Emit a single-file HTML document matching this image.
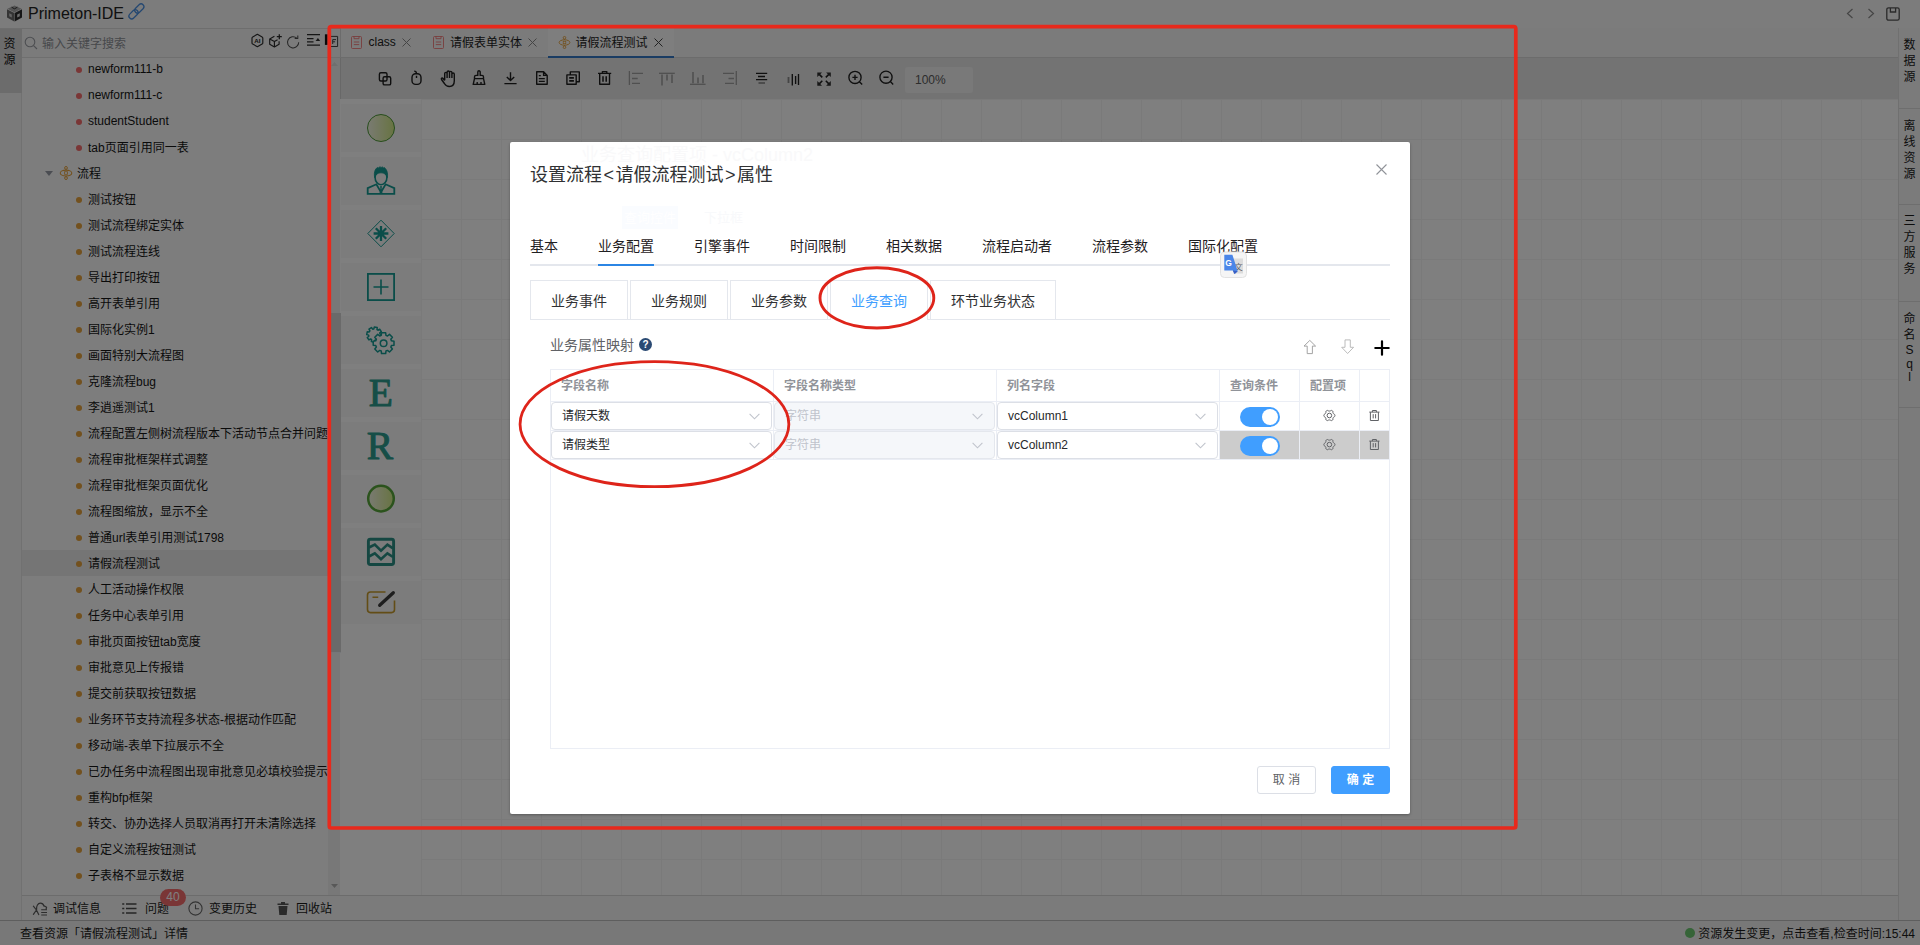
<!DOCTYPE html>
<html lang="zh-CN">
<head>
<meta charset="utf-8">
<title>Primeton-IDE</title>
<style>
*{box-sizing:border-box;margin:0;padding:0}
html,body{width:1920px;height:945px;overflow:hidden;background:#fff}
body{font-family:"Liberation Sans","Noto Sans CJK SC",sans-serif;font-size:12px;color:#1a1a1a;position:relative}
.abs{position:absolute}
svg{display:block;overflow:visible}
/* ---------- under layer ---------- */
#under{position:absolute;left:0;top:0;width:1920px;height:945px;background:#fff}
.topbar{position:absolute;left:0;top:0;width:1920px;height:29px;background:#f8f8f8;border-bottom:1px solid #dcdcdc}
.topbar .ttl{position:absolute;left:28px;top:0;line-height:27px;font-size:16px;color:#222}
.lrail{position:absolute;left:0;top:29px;width:22px;height:891px;background:#f4f4f4;border-right:1px solid #e2e2e2}
.lrail .act{position:absolute;left:0;top:0;width:22px;height:64px;background:#d9d9d9;font-size:12px;line-height:16px;text-align:center;padding:6.5px 3px 0 0;color:#111}
.search{position:absolute;left:22px;top:29px;width:318px;height:29px;background:#f6f6f6;border-bottom:1px solid #dedede}
.search .ph{position:absolute;left:20px;top:1px;line-height:29px;color:#8e9196;font-size:12px}
.tree{position:absolute;left:22px;top:58px;width:306px;height:837px;overflow:hidden;background:#fbfbfb}
.tr{position:absolute;left:0;width:306px;height:26px;line-height:26px;white-space:nowrap;font-size:12px;color:#141414}
.tr.sel{background:#ebebeb}
.dot{position:absolute;left:54px;top:11px;width:6px;height:6px;border-radius:50%}
.dr{background:#f56c6c}.do{background:#e6a23c}
.lt{position:absolute;left:66px;top:1px}.lt.en{top:0}
.ft{position:absolute;left:55px;top:1px}
.caret{position:absolute;left:23px;top:11px;border:4px solid transparent;border-top:5px solid #969ba5;border-bottom:0}
.fico{position:absolute;left:37px;top:6px;width:14px;height:14px}
.tscroll{position:absolute;left:328px;top:58px;width:12px;height:837px;background:#f1f1f1}
.tscroll .th{position:absolute;left:3px;top:255px;width:7px;height:340px;background:#d5d5d5}
.bbar{position:absolute;left:22px;top:895px;width:1876px;height:25px;background:#f7f7f7;border-top:1px solid #d9d9d9;line-height:25px}
.sbar{position:absolute;left:0;top:920px;width:1920px;height:25px;background:#f0f0f0;border-top:1px solid #bdbdbd;line-height:25px;font-size:12px;color:#1a1a1a}
.rrail{position:absolute;left:1898px;top:28px;width:22px;height:892px;background:#f6f6f6;border-left:1px solid #e0e0e0}
.rrail .it{position:absolute;left:0;width:21px;text-align:center;font-size:12px;line-height:16px;color:#1a1a1a;border-bottom:1px solid #dcdcdc}
.etabs{position:absolute;left:340px;top:28px;width:1558px;height:30px;background:#f7f7f7;border-bottom:1px solid #d8d8d8;border-left:1px solid #d8d8d8}
.etab{position:absolute;top:0;height:29px;line-height:28px;font-size:12px;color:#222;white-space:nowrap}
.etab.on{background:#fdfdfd;height:30px;border-bottom:2px solid #3478c6}
.etool{position:absolute;left:340px;top:58px;width:1558px;height:41px;background:#e7e7e7;border-left:1px solid #d0d0d0}
.canvas{position:absolute;left:341px;top:99px;width:1557px;height:796px;background-color:#fff;
 background-image:linear-gradient(to right,#f5f5f5 1px,transparent 1px),linear-gradient(to bottom,#f5f5f5 1px,transparent 1px);
 background-size:40px 40px;background-position:0 0}
.pal{position:absolute;left:341px;top:99px;width:80px;height:796px;background:#fff}
.pi{position:absolute;left:0;width:80px;height:48px;background:#f8f8f8}
#dim{position:absolute;left:0;top:0;width:1920px;height:945px;background:rgba(0,0,0,.5)}
/* ---------- modal ---------- */
#modal{position:absolute;left:510px;top:142px;width:900px;height:672px;background:#fff;border-radius:2px;box-shadow:0 1px 3px rgba(0,0,0,.3);color:#303133}
#modal .title{position:absolute;left:20px;top:20px;font-size:18px;line-height:26px;color:#303133;white-space:nowrap}
.mtab{position:absolute;top:84px;height:40px;line-height:40px;font-size:14px;color:#1f2022;white-space:nowrap}
.mline{position:absolute;left:20px;top:122px;width:860px;height:2px;background:#e4e7ed}
.mbar{position:absolute;left:88px;top:122px;width:56px;height:2px;background:#2b85e4}
.card{position:absolute;top:138px;height:40px;width:98px;border:1px solid #e4e7ed;border-bottom:none;line-height:40px;font-size:14px;color:#303133;text-align:center;white-space:nowrap}
.cline{position:absolute;left:20px;top:177px;width:860px;height:1px;background:#e4e7ed}
.sect{position:absolute;left:40px;top:193px;font-size:14px;line-height:20px;color:#606266}
.tbl{position:absolute;left:40px;top:227px;width:840px;height:380px;border:1px solid #ebeef5}
.th{position:absolute;top:0;height:32px;line-height:32px;font-size:12px;font-weight:bold;color:#909399;padding-left:10px;border-right:1px solid #ebeef5;border-bottom:1px solid #ebeef5;white-space:nowrap}
.td{position:absolute;height:29px;border-right:1px solid #ebeef5;border-bottom:1px solid #ebeef5}
.td.hl{background:#cccccc}
.sel2{position:absolute;left:0;top:0;width:221px;height:28px;border:1px solid #dcdfe6;border-radius:4px;background:#fff;line-height:26px;font-size:12px;color:#26282b;padding-left:10px;white-space:nowrap}
.sel2.dis{background:#f5f7fa;border-color:#e4e7ed;color:#c0c4cc}
.sel2 svg{position:absolute;right:11px;top:10px;width:11px;height:7px}
.sw{position:absolute;left:20px;top:5px;width:40px;height:20px;border-radius:10px;background:#409eff}
.sw:after{content:"";position:absolute;right:2px;top:2px;width:16px;height:16px;border-radius:50%;background:#fff}
.btn{position:absolute;top:624px;height:28px;width:59px;border-radius:3px;font-size:12px;line-height:26px;text-align:center;white-space:nowrap}
.btn.c{left:747px;border:1px solid #dcdfe6;color:#606266;background:#fff}
.btn.p{left:821px;width:59px;border:1px solid #409eff;background:#409eff;color:#fff;font-weight:bold}
</style>
</head>
<body>
<div id="under">
 <div class="topbar">
  <svg class="abs" style="left:6px;top:5px;width:17px;height:17px" viewBox="0 0 17 17"><path d="M1 4.2 8.3 8v8.5L1 12.6z" fill="#6a6a6a"/><path d="M16 4.2 8.7 8v8.5l7.3-3.9z" fill="#2c2c2c"/><path d="M8.5 0.6 15.6 3.8 8.5 7.4 1.4 3.8z" fill="#a8a8a8"/><path d="M5.6 2.2 8.5 3.8l2.9-1.6" fill="none" stroke="#333" stroke-width="1"/><path d="M3.2 8.2v3l2.6 1.3V9.6z" fill="#c9c9c9"/><path d="M13.8 8.2v3l-2.6 1.3V9.6z" fill="#d8d8d8"/></svg>
  <div class="ttl">Primeton-IDE</div>
  <svg class="abs" style="left:0;top:0;width:160px;height:28px" viewBox="0 0 160 28" fill="none" stroke="#4a90e2" stroke-width="1.25"><rect x="-5.300" y="-2.800" width="10.600" height="5.600" rx="2.800" transform="translate(139.300 8.500) rotate(-45)"/><rect x="-5.300" y="-2.800" width="10.600" height="5.600" rx="2.800" transform="translate(133.500 14.300) rotate(-45)"/></svg>
  <svg class="abs" style="left:1846px;top:8px;width:8px;height:11px" viewBox="0 0 8 11" fill="none" stroke="#8a8a8a" stroke-width="1.2"><path d="M6.5 1 1.5 5.5l5 4.5"/></svg>
  <svg class="abs" style="left:1867px;top:8px;width:8px;height:11px" viewBox="0 0 8 11" fill="none" stroke="#8a8a8a" stroke-width="1.2"><path d="M1.5 1l5 4.5-5 4.5"/></svg>
  <svg class="abs" style="left:1886px;top:7px;width:14px;height:14px" viewBox="0 0 14 14" fill="none" stroke="#555" stroke-width="1.3"><rect x="0.8" y="0.8" width="12.4" height="12.4" rx="1.8"/><path d="M4.4 1v4h5.2V1"/></svg>
 </div>
 <div class="lrail"><div class="act">资<br>源</div></div>
 <div class="search">
  <svg class="abs" style="left:2px;top:7px;width:14px;height:14px" viewBox="0 0 14 14" fill="none" stroke="#9a9da3" stroke-width="1.1"><circle cx="6" cy="6" r="4.8"/><path d="M9.6 9.6 13 13"/></svg>
  <div class="ph">输入关键字搜索</div>
  <svg class="abs" style="left:0;top:0;width:319px;height:29px" viewBox="22 29 319 29" fill="none" stroke="#2a2a2a" stroke-width="1.150" stroke-linejoin="round">
   <path d="M257.400 34.300 262.100 36.900a1.400 1.400 0 0 1 .7 1.200v4.800a1.400 1.400 0 0 1-.7 1.200L257.400 46.700 252.700 44.100a1.400 1.400 0 0 1-.7-1.200v-4.800a1.400 1.400 0 0 1 .7-1.200Z"/>
   <text x="257.400" y="42.700" font-size="6.200" font-family="Liberation Sans,sans-serif" font-weight="bold" fill="#1e1e1e" stroke="none" text-anchor="middle">AI</text>
   <path d="M274.400 36.300 269.700 38.900v5.400l4.700 2.600 4.700-2.600V41.300M269.700 38.900l4.700 2.600 3.200-1.800M274.400 41.500v5.400"/>
   <path d="M279.300 34.200v5M276.800 36.700h5" stroke-width="1.250"/>
   <path d="M298.700 42.300a5.600 5.600 0 1 1-1.900-4.200" stroke="#4c4c4c" stroke-width="1.050"/><path d="M297.800 35.400v3.100h-3.100" stroke="#4c4c4c" stroke-width="1.050"/>
   <path d="M307 34.700H320M307 38.500H313.500M307 41.800H313.500M307 45.200H320" stroke-width="1.250"/>
   <path d="M315.600 41 317.900 38.100 320.200 41Z" fill="#2a2a2a" stroke="none"/>
   <rect x="324.900" y="34.300" width="2.700" height="10.600" fill="#141414" stroke="none"/>
   <rect x="329.500" y="36.400" width="8.100" height="10.100" stroke="#444" stroke-width="1"/>
   <path d="M332.700 44v-4.400h3.300M332.700 41.800h2.400" stroke="#444" stroke-width="1"/>
  </svg>
 </div>
 <div class="tree">
<div class="tr" style="top:-2px"><i class="dot dr"></i><span class="lt en">newform111-b</span></div>
<div class="tr" style="top:24px"><i class="dot dr"></i><span class="lt en">newform111-c</span></div>
<div class="tr" style="top:50px"><i class="dot dr"></i><span class="lt en">studentStudent</span></div>
<div class="tr" style="top:76px"><i class="dot dr"></i><span class="lt">tab页面引用同一表</span></div>
<div class="tr" style="top:102px"><i class="caret"></i><svg class="fico" viewBox="0 0 14 14"><ellipse cx="7" cy="7" rx="5.800" ry="2.900" fill="none" stroke="#e6a23c" stroke-width="1.050"/><rect x="5.600" y="5.700" width="2.800" height="2.600" fill="none" stroke="#e6a23c" stroke-width=".8"/><circle cx="7" cy="1.900" r="1.400" fill="none" stroke="#e6a23c" stroke-width="1"/><circle cx="7" cy="12.100" r="1.400" fill="none" stroke="#e6a23c" stroke-width="1"/><path d="M7 3.300v.9M7 9.800v.9" stroke="#e6a23c" stroke-width="1"/></svg><span class="ft">流程</span></div>
<div class="tr" style="top:128px"><i class="dot do"></i><span class="lt">测试按钮</span></div>
<div class="tr" style="top:154px"><i class="dot do"></i><span class="lt">测试流程绑定实体</span></div>
<div class="tr" style="top:180px"><i class="dot do"></i><span class="lt">测试流程连线</span></div>
<div class="tr" style="top:206px"><i class="dot do"></i><span class="lt">导出打印按钮</span></div>
<div class="tr" style="top:232px"><i class="dot do"></i><span class="lt">高开表单引用</span></div>
<div class="tr" style="top:258px"><i class="dot do"></i><span class="lt">国际化实例1</span></div>
<div class="tr" style="top:284px"><i class="dot do"></i><span class="lt">画面特别大流程图</span></div>
<div class="tr" style="top:310px"><i class="dot do"></i><span class="lt">克隆流程bug</span></div>
<div class="tr" style="top:336px"><i class="dot do"></i><span class="lt">李逍遥测试1</span></div>
<div class="tr" style="top:362px"><i class="dot do"></i><span class="lt">流程配置左侧树流程版本下活动节点合并问题</span></div>
<div class="tr" style="top:388px"><i class="dot do"></i><span class="lt">流程审批框架样式调整</span></div>
<div class="tr" style="top:414px"><i class="dot do"></i><span class="lt">流程审批框架页面优化</span></div>
<div class="tr" style="top:440px"><i class="dot do"></i><span class="lt">流程图缩放，显示不全</span></div>
<div class="tr" style="top:466px"><i class="dot do"></i><span class="lt">普通url表单引用测试1798</span></div>
<div class="tr sel" style="top:492px"><i class="dot do"></i><span class="lt">请假流程测试</span></div>
<div class="tr" style="top:518px"><i class="dot do"></i><span class="lt">人工活动操作权限</span></div>
<div class="tr" style="top:544px"><i class="dot do"></i><span class="lt">任务中心表单引用</span></div>
<div class="tr" style="top:570px"><i class="dot do"></i><span class="lt">审批页面按钮tab宽度</span></div>
<div class="tr" style="top:596px"><i class="dot do"></i><span class="lt">审批意见上传报错</span></div>
<div class="tr" style="top:622px"><i class="dot do"></i><span class="lt">提交前获取按钮数据</span></div>
<div class="tr" style="top:648px"><i class="dot do"></i><span class="lt">业务环节支持流程多状态-根据动作匹配</span></div>
<div class="tr" style="top:674px"><i class="dot do"></i><span class="lt">移动端-表单下拉展示不全</span></div>
<div class="tr" style="top:700px"><i class="dot do"></i><span class="lt">已办任务中流程图出现审批意见必填校验提示</span></div>
<div class="tr" style="top:726px"><i class="dot do"></i><span class="lt">重构bfp框架</span></div>
<div class="tr" style="top:752px"><i class="dot do"></i><span class="lt">转交、协办选择人员取消再打开未清除选择</span></div>
<div class="tr" style="top:778px"><i class="dot do"></i><span class="lt">自定义流程按钮测试</span></div>
<div class="tr" style="top:804px"><i class="dot do"></i><span class="lt">子表格不显示数据</span></div>
 </div>
 <div class="tscroll"><div class="th"></div>
  <svg class="abs" style="left:3px;top:4px;width:7px;height:4px" viewBox="0 0 7 4"><path d="M0 4 3.5 0 7 4z" fill="#dedede"/></svg>
  <svg class="abs" style="left:3px;top:826px;width:7px;height:4px" viewBox="0 0 7 4"><path d="M0 0 3.5 4 7 0z" fill="#b0b0b0"/></svg>
 </div>

 <div class="etabs">
  <div class="etab" style="left:0;width:78px">
   <svg class="abs" style="left:10px;top:8px;width:11px;height:13px" viewBox="0 0 11 13" fill="none" stroke="#f27878" stroke-width=".9"><rect x=".5" y=".5" width="10" height="12" rx="1"/><path d="M3 .5v2.2h5V.5M2.8 6h5.4M2.8 8.6h5.4"/></svg>
   <span class="abs" style="left:27.5px">class</span>
   <svg class="abs" style="left:61px;top:10px;width:9px;height:9px" viewBox="0 0 9 9" stroke="#8a8a8a" stroke-width="1"><path d="M.5.5l8 8M8.5.5l-8 8"/></svg>
  </div>
  <div class="etab" style="left:82px;width:124px">
   <svg class="abs" style="left:10px;top:8px;width:11px;height:13px" viewBox="0 0 11 13" fill="none" stroke="#f27878" stroke-width=".9"><rect x=".5" y=".5" width="10" height="12" rx="1"/><path d="M3 .5v2.2h5V.5M2.8 6h5.4M2.8 8.6h5.4"/></svg>
   <span class="abs" style="left:27px;top:1px">请假表单实体</span>
   <svg class="abs" style="left:105px;top:10px;width:9px;height:9px" viewBox="0 0 9 9" stroke="#8a8a8a" stroke-width="1"><path d="M.5.5l8 8M8.5.5l-8 8"/></svg>
  </div>
  <div class="etab on" style="left:207px;width:126px">
   <svg class="abs" style="left:10px;top:8px;width:13px;height:13px" viewBox="0 0 14 14"><ellipse cx="7" cy="7" rx="5.800" ry="2.900" fill="none" stroke="#e6a23c" stroke-width="1.050"/><rect x="5.600" y="5.700" width="2.800" height="2.600" fill="none" stroke="#e6a23c" stroke-width=".8"/><circle cx="7" cy="1.900" r="1.400" fill="none" stroke="#e6a23c" stroke-width="1"/><circle cx="7" cy="12.100" r="1.400" fill="none" stroke="#e6a23c" stroke-width="1"/><path d="M7 3.300v.9M7 9.800v.9" stroke="#e6a23c" stroke-width="1"/></svg>
   <span class="abs" style="left:27.5px;top:1px">请假流程测试</span>
   <svg class="abs" style="left:106px;top:10px;width:9px;height:9px" viewBox="0 0 9 9" stroke="#444" stroke-width="1"><path d="M.5.5l8 8M8.5.5l-8 8"/></svg>
  </div>
 </div>
 <div class="etool" id="etool">
<!--TOOLICONS-->
  <div class="abs" style="left:564px;top:9px;width:68px;height:26px;border-radius:3px;background:#f2f2f2;line-height:26px;font-size:12px;color:#5a5a5a;padding-left:10px">100%</div>
 </div>
 <div class="canvas"></div>
 <div class="pal" id="pal">
  <div class="pi" style="top:5px"></div>
  <div class="pi" style="top:58px"></div>
  <div class="pi" style="top:111px"></div>
  <div class="pi" style="top:164px"></div>
  <div class="pi" style="top:217px"></div>
  <div class="pi" style="top:270px"></div>
  <div class="pi" style="top:323px"></div>
  <div class="pi" style="top:376px"></div>
  <div class="pi" style="top:429px"></div>
  <div class="pi" style="top:482px;height:43px"></div>
 </div>
 <div class="rrail">
  <div class="it" style="top:0;height:81px;padding-top:8.5px">数<br>据<br>源</div>
  <div class="it" style="top:81px;height:96px;padding-top:8.5px">离<br>线<br>资<br>源</div>
  <div class="it" style="top:177px;height:97px;padding-top:7.5px">三<br>方<br>服<br>务</div>
  <div class="it" style="top:274px;height:106px;padding-top:8.5px">命<br>名<br><span style="line-height:15px;display:block">S</span><span style="line-height:13px;display:block">q</span><span style="line-height:12px;display:block">l</span></div>
 </div>
 <div class="bbar">
  <svg class="abs" style="left:0;top:0;width:60px;height:25px" viewBox="22 896 60 25" fill="none" stroke="#5a5a5a" stroke-width="1.200" stroke-linejoin="round" stroke-linecap="round"><path d="M36.600 909.600c-.3-3.600 1.200-6.400 3.800-6.400 1.900 0 3.100 1.200 3.700 3M33.400 906.200l3 3.800-3 4.300M36.400 910l2.300 4.600M43.600 905.400l3 1.800-.5 2"/><path d="M41.200 909.800h5.800M41.200 912.400h5.800M41.200 915h5.800" stroke-width="1.050" stroke-linecap="butt"/></svg>
  <span class="abs" style="left:31px;top:1px">调试信息</span>
  <svg class="abs" style="left:100px;top:7px;width:15px;height:11px" viewBox="0 0 15 11" fill="none" stroke="#4a4a4a" stroke-width="1.600"><path d="M4 1h10.500M4 5.500h10.500M4 10h10.500M.2 1h2.100M.2 5.500h2.100M.2 10h2.100"/></svg>
  <span class="abs" style="left:123px;top:1px">问题</span>
  <div class="abs" style="left:138px;top:-7px;width:26px;height:17px;border-radius:9px;background:#f56c6c;color:#fff;font-size:12px;line-height:17px;text-align:center">40</div>
  <svg class="abs" style="left:166px;top:5px;width:15px;height:15px" viewBox="0 0 15 15" fill="none" stroke="#666" stroke-width="1.1"><circle cx="7.5" cy="7.5" r="6.6"/><path d="M7.5 3.400v4.300h3.600"/></svg>
  <span class="abs" style="left:187px;top:1px">变更历史</span>
  <svg class="abs" style="left:255px;top:6px;width:12px;height:13px" viewBox="0 0 12 13" fill="#555"><path d="M4 0h4v1.400h3.500v1.500H.5V1.400H4zM1.500 3.900h9L9.700 13H2.300z"/></svg>
  <span class="abs" style="left:274px;top:1px">回收站</span>
 </div>
 <div class="sbar"><span class="abs" style="left:20px;top:1px">查看资源「请假流程测试」详情</span>
  <i class="abs" style="left:1685px;top:7px;width:10px;height:10px;border-radius:50%;background:#6cc870"></i>
  <span class="abs" style="right:5px;top:1px;white-space:nowrap">资源发生变更，点击查看,检查时间:15:44</span>
 </div>
<svg class="abs" style="left:0;top:0;width:1920px;height:945px" viewBox="0 0 1920 945" fill="none" stroke-linecap="butt">
 <defs>
  <linearGradient id="gcirc" x1="0" y1="0" x2="1" y2="0"><stop offset="0" stop-color="#f4f6e6"/><stop offset="1" stop-color="#d0e884"/></linearGradient>
 </defs>
 <!-- toolbar icons -->
 <g stroke="#1e1e1e" stroke-width="1.4" stroke-linejoin="round">
  <rect x="379.4" y="72.800" width="7.600" height="8.200" rx="1.500"/><rect x="383.100" y="76.700" width="7.600" height="8.200" rx="1.500"/>
  <rect x="412" y="73.800" width="9" height="10.600" rx="3.600"/><path d="M416.500 75.800v2.200M416.500 73.800c0-1.900-.5-2.700-2.300-2.700"/>
  <path d="M444.700 80.200V73.600a1.200 1.200 0 0 1 2.400 0V78M447.100 73.800V72.200a1.200 1.200 0 0 1 2.400 0V78M449.500 72.600a1.200 1.200 0 0 1 2.400 0V78M451.900 74.200a1.200 1.200 0 0 1 2.400 0V80.800c0 3.700-2 5.700-5 5.700-2.500 0-3.700-1-4.900-3L441.500 79.500c-.6-1.100.7-2.100 1.600-1l1.600 2"/>
  <path d="M477.800 75.400V72a1.200 1.200 0 0 1 2.400 0V75.400H482a1.500 1.500 0 0 1 1.500 1.500V78.600L484.800 84.400H473.200L474.500 78.600V76.900a1.500 1.500 0 0 1 1.500-1.500ZM474.500 78.600H483.500M477.200 84.400v-2.400M481 84.400v-2.400"/>
  <path d="M510.500 72.200V80.600M506.800 76.900 510.500 80.600 514.200 76.900M504.400 83.600H516.600"/>
  <path d="M536.700 71.800H543.600L547.200 75.400V84.200H536.700ZM543.600 71.800V75.400H547.200M538.800 75.600h2M538.800 78.600h6M538.800 81.400h6"/>
  <path d="M566.900 74.900h9.300v9.400h-9.300zM570.300 74.900V71.900H579.300V81.800H576.200"/><path d="M569.200 77.900h4.700M569.200 80.900h4.700" stroke-width="1.700"/>
  <path d="M598 73.400H611.200M602.400 73.400V71.600H606.800V73.400M599.700 73.400V84.300H609.500V73.400"/><path d="M603 76.200V81.800M606.200 76.200V81.800" stroke-width="1.500"/>
 </g>
 <g stroke="#a0a0a0" stroke-width="1.300">
  <path d="M629.400 71V85M632 73.300H643M632 78.500H637.700M632 83.300H640"/>
  <path d="M659 73.300H674.800"/><path d="M662 74.500V85.500M667 74.500V80.500M672 74.500V83" stroke-width="1.600"/>
  <path d="M690 84.300H705.600"/><path d="M693 72V83.300M698 77.500V83.300M703 75V83.300" stroke-width="1.600"/>
  <path d="M736.300 71V85M723 73.300H734M728.500 78.500H734M725 83.300H734"/>
 </g>
 <g stroke="#1e1e1e" stroke-width="1.350">
  <path d="M756 73.300H767.200M758 76.500H765M756 79.600H767.200"/><path d="M758.500 83H765" stroke="#8a8a8a" stroke-width="1.700"/>
  <path d="M788.500 77V83" stroke="#8a8a8a" stroke-width="1.800"/><path d="M792.300 74V85.500M795.600 76V84M798.500 74V85"/>
  <path d="M822.300 77.400 819 74.100M825.800 77.400 829.100 74.100M822.300 80.800 819 84.100M825.800 80.800 829.100 84.100" stroke-width="1.500"/>
  <path d="M817.300 72.400h4.700l-4.700 4.700zM830.800 72.400h-4.700l4.700 4.700zM817.300 85.800h4.700l-4.700-4.700zM830.800 85.800h-4.700l4.700-4.700z" fill="#2e2e2e" stroke="none"/>
  <circle cx="855" cy="77.400" r="6.100"/><path d="M859.400 81.800 862.200 84.600M852.400 77.400h5.200M855 74.800v5.200"/>
  <circle cx="886" cy="77.200" r="6.100"/><path d="M890.400 81.600 893.200 84.400M883.400 77.200h5.200"/>
 </g>
 <!-- palette icons -->
 <circle cx="381" cy="128" r="13.500" fill="url(#gcirc)" stroke="#4d9a38" stroke-width="1"/>
 <g stroke="#149a92" stroke-width="1.600" stroke-linejoin="miter">
  <ellipse cx="381" cy="177.400" rx="5.900" ry="7.300"/>
  <path d="M374.700 177.600c-1.300-6.400 1.400-10 3.300-10.200l1 .9 1-1.700 1 1.300 1.200-1.200.9 1.400 1.200-.5c2 1.400 4 4.800 3 10-1.300-3.400-3-4.800-6.300-4.800s-5 1.400-6.300 4.800z" fill="#149a92" stroke-width=".8"/>
  <path d="M367.700 193.800V188.200L376.400 184.300 381 192.300 385.600 184.300 394.300 188.200V193.800Z" stroke-width="1.800"/>
  <path d="M379.900 186.200h2.200l-.5 1.800.9 5.400h-3l.9-5.400z" fill="#149a92" stroke="none"/>
  <path d="M381 220.200 394.200 233.500 381 246.800 367.800 233.500Z" stroke-width="1"/>
  <path d="M373.600 233.500H388.400M381 226.100V240.900M375.800 228.300 386.200 238.700M386.200 228.300 375.800 238.700" stroke-width="2.300"/>
  <rect x="367.900" y="273.900" width="26.200" height="26.200" stroke-width="1.800"/>
  <path d="M373.500 287H388.500M381 279.500V294.500"/>
 </g>
<g stroke="#149a92" stroke-width="1.5" stroke-linejoin="round"><path d="M379.98 334.08 L381.90 334.63 L381.31 337.53 L379.33 337.29 L378.68 338.25 L379.65 339.99 L377.18 341.63 L375.96 340.05 L374.82 340.28 L374.27 342.20 L371.37 341.61 L371.61 339.63 L370.65 338.98 L368.91 339.95 L367.27 337.48 L368.85 336.26 L368.62 335.12 L366.70 334.57 L367.29 331.67 L369.27 331.91 L369.92 330.95 L368.95 329.21 L371.42 327.57 L372.64 329.15 L373.78 328.92 L374.33 327.00 L377.23 327.59 L376.99 329.57 L377.95 330.22 L379.69 329.25 L381.33 331.72 L379.75 332.94Z" fill="#f8f8f8"/><path d="M391.46 340.85 L394.00 341.13 L394.00 345.27 L391.46 345.55 L390.82 347.09 L392.41 349.09 L389.49 352.01 L387.49 350.42 L385.95 351.06 L385.67 353.60 L381.53 353.60 L381.25 351.06 L379.71 350.42 L377.71 352.01 L374.79 349.09 L376.38 347.09 L375.74 345.55 L373.20 345.27 L373.20 341.13 L375.74 340.85 L376.38 339.31 L374.79 337.31 L377.71 334.39 L379.71 335.98 L381.25 335.34 L381.53 332.80 L385.67 332.80 L385.95 335.34 L387.49 335.98 L389.49 334.39 L392.41 337.31 L390.82 339.31Z" fill="#f8f8f8"/><circle cx="383.600" cy="343.200" r="3.300"/></g>
 <text x="368.800" y="405.800" font-family="Liberation Serif,serif" font-size="39.500" fill="#2c9c8e" stroke="#2c9c8e" stroke-width="1" stroke-linejoin="round">E</text>
 <text x="366.800" y="459.200" font-family="Liberation Serif,serif" font-size="39.500" fill="#2c9c8e" stroke="#2c9c8e" stroke-width="1" stroke-linejoin="round">R</text>
 <circle cx="381" cy="498.600" r="12.800" fill="url(#gcirc)" stroke="#57a63a" stroke-width="2.500"/>
 <g stroke="#2a8f84" stroke-linejoin="miter">
  <rect x="368.400" y="539.300" width="25.200" height="25.200" rx="2" stroke-width="2.900"/>
  <path d="M369 547.500 374.800 544.600 381 550.600 387.400 544.600 393 548.400M369 556.500 374.800 553.300 381 559.300 387.400 553.300 393 557" stroke-width="2.600"/>
 </g>
 <path d="M385.500 592H370.500a3 3 0 0 0-3 3V609.600a3 3 0 0 0 3 3H391.500a3 3 0 0 0 3-3V600.500M372.500 597.300H378.200" stroke="#c69a2c" stroke-width="1.600"/>
 <path d="M379.700 605.300 393.300 592.700" stroke="#3c3c3c" stroke-width="3.300" stroke-linecap="round"/>
</svg>
</div>
<div id="dim"></div>
<div id="modal">
 <div class="abs" style="left:71px;top:0;font-size:18px;line-height:26px;color:#f9f9fa;white-space:nowrap">业务查询配置项 - vcColumn2</div>
 <div class="abs" style="left:112px;top:64px;width:56px;height:23px;background:#fafcff;color:#fff;font-size:13px;line-height:23px;text-align:center">查询控件</div>
 <div class="abs" style="left:194px;top:64px;font-size:13px;line-height:23px;color:#f8f9fb;white-space:nowrap">下拉框</div>
 <div class="title">设置流程<span style="letter-spacing:0;padding:0 1.5px">&lt;</span>请假流程测试<span style="padding:0 1.5px">&gt;</span>属性</div>
 <svg class="abs" style="left:866px;top:22px;width:11px;height:11px" viewBox="0 0 11 11" stroke="#909399" stroke-width="1.1"><path d="M.5.5l10 10M10.5.5l-10 10"/></svg>
 <div class="mtab" style="left:20px">基本</div>
 <div class="mtab" style="left:88px">业务配置</div>
 <div class="mtab" style="left:184px">引擎事件</div>
 <div class="mtab" style="left:280px">时间限制</div>
 <div class="mtab" style="left:376px">相关数据</div>
 <div class="mtab" style="left:472px">流程启动者</div>
 <div class="mtab" style="left:582px">流程参数</div>
 <div class="mtab" style="left:678px">国际化配置</div>
 <div class="mline"></div><div class="mbar"></div>
 <div class="card" style="left:20px">业务事件</div>
 <div class="card" style="left:120px">业务规则</div>
 <div class="card" style="left:220px">业务参数</div>
 <div class="card" style="left:320px;color:#409eff">业务查询</div>
 <div class="card" style="left:420px;width:126px">环节业务状态</div>
 <div class="cline"></div><div class="abs" style="left:321px;top:177px;width:96px;height:1px;background:#fff"></div>
 <div class="sect">业务属性映射</div>
 <div class="abs" style="left:129px;top:196px;width:13px;height:13px;border-radius:50%;background:#2a4a73;color:#fff;font-size:10px;font-weight:bold;line-height:13px;text-align:center">?</div>
 <div class="tbl" id="tbl">
<div class="th" style="left:0px;width:223px;">字段名称</div>
<div class="th" style="left:223px;width:223px;">字段名称类型</div>
<div class="th" style="left:446px;width:223px;">列名字段</div>
<div class="th" style="left:669px;width:80px;">查询条件</div>
<div class="th" style="left:749px;width:60px;">配置项</div>
<div class="th" style="left:809px;width:29px;border-right:none;"></div>
<div class="td" style="left:0;top:32px;width:223px"><div class="sel2">请假天数<svg viewBox="0 0 11 7" fill="none" stroke="#c0c4cc" stroke-width="1.1"><path d="M.6.8 5.500 5.800 10.400.8"/></svg></div></div>
<div class="td" style="left:223px;top:32px;width:223px"><div class="sel2 dis">字符串<svg viewBox="0 0 11 7" fill="none" stroke="#c0c4cc" stroke-width="1.1"><path d="M.6.8 5.500 5.800 10.400.8"/></svg></div></div>
<div class="td" style="left:446px;top:32px;width:223px"><div class="sel2">vcColumn1<svg viewBox="0 0 11 7" fill="none" stroke="#c0c4cc" stroke-width="1.1"><path d="M.6.8 5.500 5.800 10.400.8"/></svg></div></div>
<div class="td" style="left:669px;top:32px;width:80px"><div class="sw"></div></div>
<div class="td" style="left:749px;top:32px;width:60px"></div>
<div class="td" style="left:809px;top:32px;width:29px;border-right:none"></div>
<div class="td" style="left:0;top:61px;width:223px"><div class="sel2">请假类型<svg viewBox="0 0 11 7" fill="none" stroke="#c0c4cc" stroke-width="1.1"><path d="M.6.8 5.500 5.800 10.400.8"/></svg></div></div>
<div class="td" style="left:223px;top:61px;width:223px"><div class="sel2 dis">字符串<svg viewBox="0 0 11 7" fill="none" stroke="#c0c4cc" stroke-width="1.1"><path d="M.6.8 5.500 5.800 10.400.8"/></svg></div></div>
<div class="td" style="left:446px;top:61px;width:223px"><div class="sel2">vcColumn2<svg viewBox="0 0 11 7" fill="none" stroke="#c0c4cc" stroke-width="1.1"><path d="M.6.8 5.500 5.800 10.400.8"/></svg></div></div>
<div class="td hl" style="left:669px;top:61px;width:80px"><div class="sw"></div></div>
<div class="td hl" style="left:749px;top:61px;width:60px"></div>
<div class="td hl" style="left:809px;top:61px;width:29px;border-right:none"></div>
 </div>
 <svg class="abs" style="left:0;top:0;width:900px;height:672px" viewBox="510 142 900 672" fill="none">
  <path d="M1309.800 340.400 1315.600 346.100H1312.400V353.600H1307.200V346.100H1304Z" stroke="#9a9a9a" stroke-width=".9"/>
  <path d="M1345 339.900H1350.300V347.300H1353.600L1347.600 353.500 1341.700 347.300H1345Z" stroke="#b4b4b4" stroke-width=".9"/>
  <path d="M1375.300 348H1388.700M1382 341.300V354.700" stroke="#000" stroke-width="2.200" stroke-linecap="round"/>
<g stroke="#606266" stroke-width="1" stroke-linejoin="round"><path d="M1334.95 415.50 L1334.93 415.98 L1334.73 416.44 L1334.23 416.79 L1333.71 417.07 L1333.43 417.38 L1333.25 417.73 L1333.05 418.05 L1332.91 418.45 L1332.94 419.04 L1332.88 419.65 L1332.58 420.05 L1332.18 420.31 L1331.75 420.53 L1331.25 420.59 L1330.69 420.33 L1330.20 420.02 L1329.79 419.93 L1329.40 419.95 L1329.01 419.93 L1328.60 420.02 L1328.11 420.33 L1327.55 420.59 L1327.05 420.53 L1326.62 420.31 L1326.22 420.05 L1325.92 419.65 L1325.86 419.04 L1325.89 418.45 L1325.75 418.05 L1325.55 417.73 L1325.37 417.38 L1325.09 417.07 L1324.57 416.79 L1324.07 416.44 L1323.87 415.98 L1323.85 415.50 L1323.87 415.02 L1324.07 414.56 L1324.57 414.21 L1325.09 413.93 L1325.37 413.62 L1325.55 413.27 L1325.75 412.95 L1325.89 412.55 L1325.86 411.96 L1325.92 411.35 L1326.22 410.95 L1326.62 410.69 L1327.05 410.47 L1327.55 410.41 L1328.11 410.67 L1328.60 410.98 L1329.01 411.07 L1329.40 411.05 L1329.79 411.07 L1330.20 410.98 L1330.69 410.67 L1331.25 410.41 L1331.75 410.47 L1332.18 410.69 L1332.58 410.95 L1332.88 411.35 L1332.94 411.96 L1332.91 412.55 L1333.05 412.95 L1333.25 413.27 L1333.43 413.62 L1333.71 413.93 L1334.23 414.21 L1334.73 414.56 L1334.93 415.02Z"/><circle cx="1329.400" cy="415.500" r="2.300"/><path d="M1334.95 444.60 L1334.93 445.08 L1334.73 445.54 L1334.23 445.89 L1333.71 446.17 L1333.43 446.48 L1333.25 446.83 L1333.05 447.15 L1332.91 447.55 L1332.94 448.14 L1332.88 448.75 L1332.58 449.15 L1332.18 449.41 L1331.75 449.63 L1331.25 449.69 L1330.69 449.43 L1330.20 449.12 L1329.79 449.03 L1329.40 449.05 L1329.01 449.03 L1328.60 449.12 L1328.11 449.43 L1327.55 449.69 L1327.05 449.63 L1326.62 449.41 L1326.22 449.15 L1325.92 448.75 L1325.86 448.14 L1325.89 447.55 L1325.75 447.15 L1325.55 446.83 L1325.37 446.48 L1325.09 446.17 L1324.57 445.89 L1324.07 445.54 L1323.87 445.08 L1323.85 444.60 L1323.87 444.12 L1324.07 443.66 L1324.57 443.31 L1325.09 443.03 L1325.37 442.72 L1325.55 442.38 L1325.75 442.05 L1325.89 441.65 L1325.86 441.06 L1325.92 440.45 L1326.22 440.05 L1326.62 439.79 L1327.05 439.57 L1327.55 439.51 L1328.11 439.77 L1328.60 440.08 L1329.01 440.17 L1329.40 440.15 L1329.79 440.17 L1330.20 440.08 L1330.69 439.77 L1331.25 439.51 L1331.75 439.57 L1332.18 439.79 L1332.58 440.05 L1332.88 440.45 L1332.94 441.06 L1332.91 441.65 L1333.05 442.05 L1333.25 442.38 L1333.43 442.72 L1333.71 443.03 L1334.23 443.31 L1334.73 443.66 L1334.93 444.12Z"/><circle cx="1329.400" cy="444.600" r="2.300"/></g>
  <g stroke="#606266" stroke-width="1">
   <path d="M1369.300 412.100H1379.500M1372.400 412.100V410.500H1376.400V412.100M1370.400 412.100V420.500H1378.400V412.100M1373.200 414.100V418.400M1375.600 414.100V418.400"/>
   <path d="M1369.300 441.100H1379.500M1372.400 441.100V439.500H1376.400V441.100M1370.400 441.100V449.500H1378.400V441.100M1373.200 443.100V447.400M1375.600 443.100V447.400"/>
  </g>
  <!-- translate widget -->
  <rect x="1220.500" y="252" width="26" height="25.500" rx="4" fill="#f5f5f5" stroke="#e2e2e2" stroke-width="1"/>
  <rect x="1233" y="258.500" width="10" height="15" fill="#dcdcdc"/>
  <text x="1234.300" y="270" font-size="8.500" font-family="Noto Sans CJK SC,sans-serif" fill="#5f6368">文</text>
  <path d="M1224.300 254.800H1232.400L1237.700 271.300 1234.600 273.900 1232.800 270.600H1224.300Z" fill="#4a86e8"/>
  <path d="M1232.800 270.600 1237.700 271.300 1234.600 273.900Z" fill="#3a5fc4"/>
  <text x="1225.300" y="265.800" font-size="8.500" font-weight="bold" font-family="Liberation Sans,sans-serif" fill="#fff">G</text>
 </svg>

 <div class="btn c">取 消</div>
 <div class="btn p">确 定</div>
</div>
<svg class="abs" style="left:0;top:0;width:1920px;height:945px" viewBox="0 0 1920 945" fill="none">
 <rect x="329.300" y="26.700" width="1186.500" height="801.300" rx="2" stroke="#e8291c" stroke-width="3.700"/>
 <ellipse cx="876.900" cy="297.900" rx="56.900" ry="30.100" stroke="#de241a" stroke-width="2.900"/>
 <ellipse cx="654.450" cy="424.200" rx="134.400" ry="62.500" stroke="#de241a" stroke-width="2.800"/>
</svg>

</body>
</html>
